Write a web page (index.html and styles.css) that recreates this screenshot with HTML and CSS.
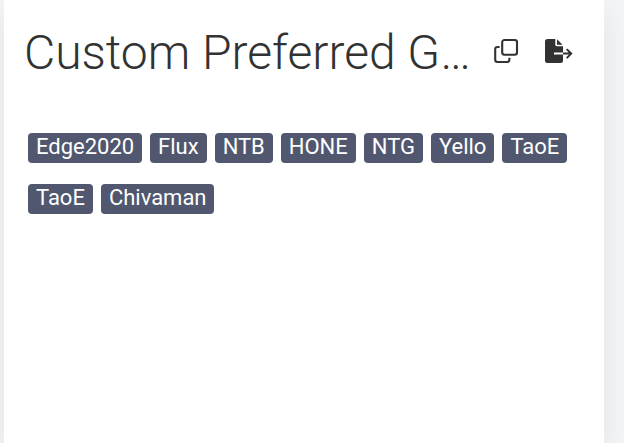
FILE: index.html
```html
<!DOCTYPE html>
<html lang="en">
<head>
<meta charset="utf-8">
<title>Custom Preferred Group</title>
<link rel="stylesheet" href="styles.css">
</head>
<body>
<main class="card">
  <header class="card-header">
    <h1 class="title">Custom Preferred G…</h1>
    <div class="actions">
      <svg class="icon copy" viewBox="0 0 26 26" fill="none" stroke="#323232" stroke-width="2.1">
        <rect x="9.2" y="2" width="14.8" height="14.8" rx="2.2"/>
        <path d="M6.6 9H4.4Q2.2 9 2.2 11.2V21.8Q2.2 24 4.4 24H14.2Q16.4 24 16.4 21.8V19.8"/>
      </svg>
      <svg class="icon export" viewBox="0 0 28 26">
        <path fill="#323232" d="M3.5 1H11.3V6.8Q11.3 8.2 12.7 8.2H19V14.6H10V16.6H19V22.5Q19 25 16.5 25H3.5Q1 25 1 22.5V3.5Q1 1 3.5 1ZM13 1.2L18.6 6.8H13Z"/>
        <path fill="none" stroke="#323232" stroke-width="2" d="M19 15.6H27M22.7 11.1L27.2 15.6L22.7 20.1"/>
      </svg>
    </div>
  </header>
  <div class="tags">
    <span class="tag">Edge2020</span>
    <span class="tag">Flux</span>
    <span class="tag">NTB</span>
    <span class="tag">HONE</span>
    <span class="tag">NTG</span>
    <span class="tag">Yello</span>
    <span class="tag">TaoE</span>
    <span class="tag">TaoE</span>
    <span class="tag">Chivaman</span>
  </div>
</main>
</body>
</html>
```
FILE: styles.css
```css
* { box-sizing: border-box; }
body {
  margin: 0;
  height: 443px;
  overflow: hidden;
  background: #f2f4f6;
  font-family: Roboto, "Liberation Sans", sans-serif;
}
.card {
  width: 600px;
  height: 443px;
  margin-left: 4px;
  padding: 22px 24px 0;
  background: #fff;
  box-shadow: 0 12px 24px rgba(0, 0, 0, 0.07);
}
.card-header {
  display: flex;
  align-items: flex-start;
  height: 61px;
}
.title {
  width: 465px;
  margin: 0 0 0 -4px;
  font-size: 48px;
  line-height: 62px;
  font-weight: 300;
  color: #323232;
  white-space: nowrap;
}
.actions {
  display: flex;
  gap: 25px;
  margin: 16px 0 0 4px;
}
.icon { display: block; height: 26px; overflow: visible; }
.copy { width: 26px; }
.export { width: 28px; }
.tags {
  display: flex;
  flex-wrap: wrap;
  gap: 21px 8px;
  margin-top: 50px;
}
.tag {
  height: 30px;
  padding: 0 8px;
  border-radius: 4px;
  background: #50576f;
  color: #fff;
  font-size: 22px;
  letter-spacing: -0.01px;
  line-height: 28px;
}
```
